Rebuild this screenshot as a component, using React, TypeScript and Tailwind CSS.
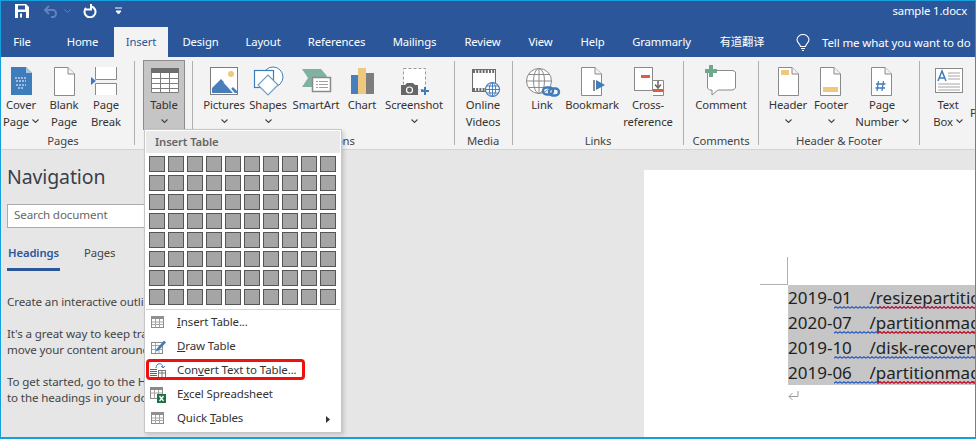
import type { ReactNode } from "react";

const Chevron = ({ className = "" }: { className?: string }) => (
  <svg width="7" height="5" viewBox="0 0 7 5" className={className}>
    <path d="M0.5 0.5 L3.5 3.5 L6.5 0.5" fill="none" stroke="#444" strokeWidth="1.1" />
  </svg>
);

const PagePath = ({ x = 10, w = 20 }: { x?: number; w?: number }) => (
  <>
    <path d={`M${x + 0.5} 5.5 H${x + w - 6} L${x + w + 0.5} 12 V33.5 H${x + 0.5} Z`} fill="#fff" stroke="#8a8a8a" />
    <path d={`M${x + w - 6} 5.5 V12 H${x + w + 0.5}`} fill="#f3f3f3" stroke="#8a8a8a" />
  </>
);

const Icon = ({ children }: { children: ReactNode }) => (
  <svg width="40" height="36" viewBox="0 0 40 36" className="shrink-0">
    {children}
  </svg>
);

const icons: Record<string, ReactNode> = {
  cover: (
    <Icon>
      <path d="M10 5 H25 L31 11 V33 H10 Z" fill="#3f7cbb" />
      <path d="M25 5 L31 11 H25 Z" fill="#a9c6e3" />
      <path d="M14 16 H26 M15 19 H25 M15 23 H25 M17 26 H23" stroke="#fff" strokeDasharray="2 1" fill="none" />
    </Icon>
  ),
  blank: (
    <Icon>
      <PagePath />
    </Icon>
  ),
  pageBreak: (
    <Icon>
      <rect x="10" y="5" width="20" height="12" fill="#fff" />
      <rect x="10" y="22" width="20" height="11" fill="#fff" />
      <path d="M9.5 5 V17.5 H30.5 V5" fill="none" stroke="#8a8a8a" />
      <path d="M9.5 33 V21.5 H30.5 V33" fill="none" stroke="#8a8a8a" />
      <path d="M5 15 L10 19 L5 23 Z" fill="#3f7cbb" />
    </Icon>
  ),
  table: (
    <Icon>
      <rect x="7" y="6" width="28" height="25" fill="#fff" />
      <rect x="7" y="6" width="28" height="5" fill="#6d6d6d" />
      <path d="M7.5 11 V30.5 H34.5 V11 M7 16.5 H35 M7 21.5 H35 M7 26.5 H35 M16.5 11 V31 M25.5 11 V31" fill="none" stroke="#7d7d7d" />
    </Icon>
  ),
  pictures: (
    <Icon>
      <rect x="6.5" y="5.5" width="27" height="27" fill="#fff" stroke="#7d7d7d" />
      <circle cx="27" cy="12" r="3" fill="#edc87e" />
      <path d="M8 31 V26 L17 17 L27 27 L29 25 L33 29 V31 Z" fill="#4a7ebb" />
      <path d="M20 20 L30 31" stroke="#fff" strokeWidth="1.5" />
    </Icon>
  ),
  shapes: (
    <Icon>
      <circle cx="25" cy="15" r="10" fill="#fff" stroke="#4a7ebb" />
      <rect x="6.5" y="8.5" width="19" height="17" fill="#fff" stroke="#3f7cbb" strokeWidth="1.2" />
      <path d="M20 13 L30 23 L20 33 L10 23 Z" fill="#fff" stroke="#6f9cc8" strokeWidth="1.2" />
    </Icon>
  ),
  smartArt: (
    <Icon>
      <path d="M6 7 H25 L31 14 L25 25 H6 L12 16 Z" fill="#7fb2a0" />
      <rect x="16.5" y="15.5" width="18" height="14" fill="#fff" stroke="#8a8a8a" strokeWidth="1.5" />
      <path d="M20 19.5 H22 M23 19.5 H32 M20 22.5 H22 M23 22.5 H32 M20 25.5 H22 M23 25.5 H32" stroke="#a0a0a0" />
    </Icon>
  ),
  chart: (
    <Icon>
      <rect x="9" y="13" width="7" height="19" fill="#4a7ebb" />
      <rect x="16" y="6" width="8" height="26" fill="#edc87e" />
      <rect x="24" y="11" width="8" height="21" fill="#7d7d7d" />
    </Icon>
  ),
  screenshot: (
    <Icon>
      <rect x="9.5" y="6.5" width="22" height="21" fill="#fff" stroke="#9a9a9a" strokeDasharray="3 2" />
      <path d="M7 23 H11 L13 21 H19 L21 23 H24 V33 H7 Z" fill="#666" />
      <circle cx="15.5" cy="28" r="3" fill="#666" stroke="#fff" strokeWidth="1.2" />
      <path d="M31 25 V33 M27 29 H35" stroke="#3f7cbb" strokeWidth="2" />
    </Icon>
  ),
  videos: (
    <Icon>
      <rect x="9.5" y="7.5" width="23" height="22" fill="#fff" stroke="#6d6d6d" />
      <path d="M10 9.5 H32 M10 27.5 H22" stroke="#6d6d6d" strokeWidth="3" strokeDasharray="2 1.2" />
      <circle cx="29.5" cy="27.5" r="7" fill="#fff" stroke="#4a7ebb" strokeWidth="1.2" />
      <path d="M22.5 27.5 H36.5 M23.5 24 H35.5 M23.5 31 H35.5 M29.5 20.5 V34.5" stroke="#4a7ebb" />
      <ellipse cx="29.5" cy="27.5" rx="3.2" ry="7" fill="none" stroke="#4a7ebb" />
    </Icon>
  ),
  link: (
    <Icon>
      <circle cx="17" cy="19" r="12.5" fill="#fff" stroke="#8a8a8a" />
      <ellipse cx="17" cy="19" rx="5.5" ry="12.5" fill="none" stroke="#8a8a8a" />
      <path d="M17 6.5 V31.5 M4.5 19 H29.5 M6.5 12.5 H27.5 M6.5 25.5 H27.5" stroke="#8a8a8a" />
      <rect x="21" y="25.5" width="10" height="7" rx="3.5" fill="none" stroke="#3f7cbb" strokeWidth="2.4" />
      <rect x="27" y="26.5" width="10" height="7" rx="3.5" fill="none" stroke="#3f7cbb" strokeWidth="2.4" />
    </Icon>
  ),
  bookmark: (
    <Icon>
      <PagePath x={9} w={20} />
      <rect x="21" y="18" width="2" height="11" fill="#8a8a8a" />
      <path d="M24 18 L33 23 L24 28 Z" fill="#3f7cbb" />
    </Icon>
  ),
  cross: (
    <Icon>
      <rect x="6.5" y="5.5" width="18" height="23" fill="#fff" stroke="#8a8a8a" />
      <rect x="13" y="13" width="9" height="3" fill="#d9603b" />
      <path d="M25 18.5 H35.5 V33.5 H25" fill="#fff" stroke="#8a8a8a" />
      <path d="M30 19 V25 M27 22.5 L30 26 L33 22.5" fill="none" stroke="#6d6d6d" strokeWidth="1.6" />
      <rect x="25" y="27" width="10" height="3" fill="#d9603b" />
    </Icon>
  ),
  comment: (
    <Icon>
      <path d="M8.5 8.5 H32 L34.5 10 V26 L32 28 H17 L11 33 V28 H8.5 L6.5 26 V10 Z" fill="#fff" stroke="#8a8a8a" />
      <path d="M8 3 H12 V7 H16 V11 H12 V15 H8 V11 H4 V7 H8 Z" fill="#6fa88f" />
    </Icon>
  ),
  header: (
    <Icon>
      <PagePath />
      <rect x="13" y="8" width="8" height="5" fill="#edc87e" />
    </Icon>
  ),
  footer: (
    <Icon>
      <PagePath x={9} w={20} />
      <rect x="12" y="25" width="15" height="5" fill="#edc87e" />
    </Icon>
  ),
  pageNumber: (
    <Icon>
      <PagePath x={9} w={20} />
      <path d="M16.5 19 L15 29 M21.5 19 L20 29 M14 22 H23.5 M13.5 26 H23" stroke="#3f7cbb" strokeWidth="1.3" />
    </Icon>
  ),
  textBox: (
    <Icon>
      <rect x="7.5" y="6.5" width="27" height="24" fill="#fff" stroke="#8a8a8a" />
      <path d="M10 19 L14 9 L18 19 M11.5 16 H16.5" fill="none" stroke="#3f7cbb" strokeWidth="1.5" />
      <path d="M20 11 H32 M20 14 H32 M20 17 H32 M10 22 H32 M10 25 H32 M10 28 H32" stroke="#a5a5a5" />
    </Icon>
  ),
};

type Btn = {
  icon: string;
  width: string;
  top: string;
  bottom?: string;
  chevron?: boolean;
  active?: boolean;
};

const RibbonButton = ({ icon, width, top, bottom, chevron, active }: Btn) => (
  <div
    className={`flex h-[70px] flex-col items-center pt-[2px] text-[11.3px] leading-[16.5px] text-[#333] ${width} ${
      active ? "border border-[#8c8c8c] bg-[#c5c5c5]" : ""
    }`}
  >
    <div className={`flex h-[35px] justify-center ${active ? "-mt-[1px]" : ""}`}>{icons[icon]}</div>
    <span className="whitespace-nowrap">{top}</span>
    <span className="flex h-[16.5px] items-center gap-[3px] whitespace-nowrap">
      {bottom}
      {chevron && <Chevron />}
    </span>
  </div>
);

type Group = {
  label: string;
  width: string;
  pad: string;
  buttons: Btn[];
};

const groups: Group[] = [
  {
    label: "Pages",
    width: "w-[126px]",
    pad: "mr-[8px]",
    buttons: [
      { icon: "cover", width: "w-[42px]", top: "Cover", bottom: "Page", chevron: true },
      { icon: "blank", width: "w-[44px]", top: "Blank", bottom: "Page" },
      { icon: "pageBreak", width: "w-[40px]", top: "Page", bottom: "Break" },
    ],
  },
  {
    label: "",
    width: "w-[42px]",
    pad: "ml-[8px] mr-[7px]",
    buttons: [{ icon: "table", width: "w-[42px]", top: "Table", chevron: true, active: true }],
  },
  {
    label: "Illustrations",
    width: "w-[242px]",
    pad: "ml-[10px] mr-[9px]",
    buttons: [
      { icon: "pictures", width: "w-[42px]", top: "Pictures", chevron: true },
      { icon: "shapes", width: "w-[46px]", top: "Shapes", chevron: true },
      { icon: "smartArt", width: "w-[50px]", top: "SmartArt" },
      { icon: "chart", width: "w-[42px]", top: "Chart" },
      { icon: "screenshot", width: "w-[62px]", top: "Screenshot", chevron: true },
    ],
  },
  {
    label: "Media",
    width: "w-[56px]",
    pad: "mr-[1px]",
    buttons: [{ icon: "videos", width: "w-[56px]", top: "Online", bottom: "Videos" }],
  },
  {
    label: "Links",
    width: "w-[152px]",
    pad: "ml-[9px] mr-[9px]",
    buttons: [
      { icon: "link", width: "w-[40px]", top: "Link" },
      { icon: "bookmark", width: "w-[60px]", top: "Bookmark" },
      { icon: "cross", width: "w-[52px]", top: "Cross-", bottom: "reference" },
    ],
  },
  {
    label: "Comments",
    width: "w-[74px]",
    pad: "",
    buttons: [{ icon: "comment", width: "w-[74px]", top: "Comment" }],
  },
  {
    label: "Header & Footer",
    width: "w-[142px]",
    pad: "ml-[9px] mr-[9px]",
    buttons: [
      { icon: "header", width: "w-[40px]", top: "Header", chevron: true },
      { icon: "footer", width: "w-[46px]", top: "Footer", chevron: true },
      { icon: "pageNumber", width: "w-[56px]", top: "Page", bottom: "Number", chevron: true },
    ],
  },
];

const tabs = [
  { name: "File", cls: "w-[44px]" },
  { name: "Home", cls: "ml-[7px] w-[63px]" },
  { name: "Insert", cls: "w-[54px] bg-[#f3f3f3] text-[#2b579a]" },
  { name: "Design", cls: "w-[65px]" },
  { name: "Layout", cls: "w-[60px]" },
  { name: "References", cls: "w-[87px]" },
  { name: "Mailings", cls: "w-[69px]" },
  { name: "Review", cls: "w-[67px]" },
  { name: "View", cls: "w-[49px]" },
  { name: "Help", cls: "w-[55px]" },
  { name: "Grammarly", cls: "w-[83px]" },
  { name: "有道翻译", cls: "w-[78px]" },
];

const TitleBar = () => (
  <div className="flex h-[27px] items-center justify-between bg-[#2b579a] pr-[9px] pb-[5px] pl-[15px]">
    <div className="flex items-center">
      <svg width="14" height="14" viewBox="0 0 14 14">
        <path d="M0 0 H11 L14 3 V14 H0 Z" fill="#fff" />
        <rect x="3" y="1.5" width="7" height="4" fill="#2b579a" />
        <rect x="3" y="8" width="8" height="6" fill="#2b579a" />
        <rect x="5" y="9.5" width="2" height="4" fill="#fff" />
      </svg>
      <svg width="16" height="13" viewBox="0 0 16 13" className="ml-[15px]">
        <path d="M1 5 H10 A4 4 0 0 1 10 12 H7 M5 1 L1 5 L5 9" fill="none" stroke="#5f83ba" strokeWidth="2" />
      </svg>
      <svg width="7" height="5" viewBox="0 0 7 5" className="ml-[4px]">
        <path d="M0.5 0.5 L3.5 3.5 L6.5 0.5" fill="none" stroke="#5f83ba" />
      </svg>
      <svg width="14" height="14" viewBox="0 0 14 14" className="ml-[12px]">
        <path d="M8.5 2.5 A5.5 5.5 0 1 1 3 4 M8 0 V5.5 H2.5" fill="none" stroke="#fff" strokeWidth="2" />
      </svg>
      <svg width="7" height="8" viewBox="0 0 7 8" className="ml-[18px]">
        <path d="M0 1 H7 M1 4 H6 L3.5 7 Z" fill="#fff" stroke="#fff" strokeWidth="1" />
      </svg>
    </div>
    <span className="text-[11.3px] text-white">sample 1.docx</span>
  </div>
);

const TabBar = () => (
  <div className="flex h-[30px] items-stretch bg-[#2b579a] text-[11.3px] text-white">
    {tabs.map((t) => (
      <div key={t.name} className={`flex items-center justify-center pt-[1px] ${t.cls}`}>
        {t.name}
      </div>
    ))}
    <div className="ml-[15px] flex items-center pt-[1px]">
      <svg width="14" height="18" viewBox="0 0 14 18">
        <path
          d="M4.5 12.5 C4.5 10 1 9 1 5.8 A6 5.3 0 0 1 13 5.8 C13 9 9.5 10 9.5 12.5 Z M5 14.5 H9 M6 16.5 H8"
          fill="none"
          stroke="#fff"
          strokeWidth="1.1"
        />
      </svg>
      <span className="ml-[12px] text-[11.5px] whitespace-nowrap">Tell me what you want to do</span>
    </div>
  </div>
);

const Ribbon = () => (
  <div className="flex h-[93px] overflow-hidden border-b border-[#d4d4d4] bg-[#f3f3f3]">
    {groups.map((g) => (
      <div key={g.label || "tables"} className="flex">
        <div className={`flex flex-col ${g.width} ${g.pad}`}>
          <div className="mt-[3px] flex h-[70px]">
            {g.buttons.map((b) => (
              <RibbonButton key={b.icon} {...b} />
            ))}
          </div>
          <div className="mt-[3px] text-center text-[11.3px] leading-[16px] whitespace-nowrap text-[#444]">{g.label}</div>
        </div>
        <div className="mt-[4px] h-[84px] w-px bg-[#b0b0b0]" />
      </div>
    ))}
    <div className="mt-[3px] ml-[8px] flex">
      <RibbonButton icon="textBox" width="w-[40px]" top="Text" bottom="Box" chevron />
      <span className="mt-[45px] ml-[2px] text-[11.3px] leading-[16.5px] text-[#333]">P</span>
    </div>
  </div>
);

const NavPane = () => (
  <div className="w-[300px] overflow-hidden pt-[13px] pl-[7px] whitespace-nowrap">
    <div className="text-[19.5px] leading-[27px] text-[#3a3f4a]">Navigation</div>
    <div className="mt-[14px] flex h-[24px] items-center border border-[#ababab] bg-white pb-[2px] pl-[6px] text-[11.6px] text-[#666]">
      Search document
    </div>
    <div className="mt-[16px] flex text-[11.3px] leading-[17px]">
      <div className="w-[53px] border-b-[3px] border-[#2b579a] pb-[7px] pl-[1px] font-semibold text-[#2b579a]">Headings</div>
      <div className="ml-[24px] text-[#444]">Pages</div>
    </div>
    <div className="mt-[23px] flex flex-col text-[11.6px] leading-[16px] text-[#444]">
      <p>Create an interactive outline of your document.</p>
      <p className="mt-[16px]">It&apos;s a great way to keep track of where you are or quickly</p>
      <p>move your content around by dragging headings.</p>
      <p className="mt-[16px]">To get started, go to the Home tab and apply Heading styles</p>
      <p>to the headings in your document.</p>
    </div>
  </div>
);

const docLines = [
  { date: "01", path: "resizepartition", bad: true },
  { date: "07", path: "partitionmagic", bad: true, year: "2020" },
  { date: "10", path: "disk-recovery", bad: false },
  { date: "06", path: "partitionmagic", bad: true },
];

// proofing squiggle under a doc line: blue first, red once the word is misspelt
const Squiggle = ({ bad }: { bad: boolean }) => (
  <svg width="144" height="3" className="absolute top-[21px] left-[46px]">
    <defs>
      <pattern id="wave-blue" width="4" height="3" patternUnits="userSpaceOnUse">
        <path d="M0 2.2 L2 0.7 L4 2.2" fill="none" stroke="#1f55c4" strokeWidth="1.1" />
      </pattern>
      <pattern id="wave-red" width="4" height="3" patternUnits="userSpaceOnUse">
        <path d="M0 2.2 L2 0.7 L4 2.2" fill="none" stroke="#e0101a" strokeWidth="1.1" />
      </pattern>
    </defs>
    <rect width="144" height="3" fill="url(#wave-blue)" />
    {bad && <rect x="43" width="101" height="3" fill="url(#wave-red)" />}
  </svg>
);

const DocPage = () => (
  <div className="mt-[20px] ml-[344px] h-[267px] flex-1 overflow-hidden bg-white">
    <div className="mt-[87px] ml-[116px] h-[28px] w-[28px] border-r border-b border-[#b0b0b0]" />
    <div className="ml-[144px] bg-[#c6c6c6] text-[17px] leading-[25px] tracking-normal whitespace-nowrap text-[#222]">
      {docLines.map((l) => (
        <div key={l.date} className="relative h-[25px]">
          {l.year ?? "2019"}-{l.date}
          {"\u00a0\u00a0\u00a0\u00a0"}/{l.path}
          <Squiggle bad={l.bad} />
        </div>
      ))}
    </div>
    <svg width="11" height="10" viewBox="0 0 11 10" className="mt-[6px] ml-[144px]">
      <path d="M10 0 V5.5 H1 M4.5 2 L1 5.5 L4.5 9" fill="none" stroke="#9a9a9a" />
    </svg>
  </div>
);

const SmallTable = () => (
  <svg width="16" height="16" viewBox="0 0 16 16">
    <rect x="1.5" y="2.5" width="12" height="11" fill="#fff" stroke="#8a8a8a" />
    <rect x="1" y="2" width="13" height="3" fill="#8f8f8f" />
    <path d="M1.5 8 H13.5 M1.5 10.5 H13.5 M5.5 5 V13.5 M9.5 5 V13.5" stroke="#a5a5a5" />
  </svg>
);

const menuItems: { key: string; icon: ReactNode; label: ReactNode; arrow?: boolean }[] = [
  {
    key: "insert",
    icon: <SmallTable />,
    label: (
      <>
        <u>I</u>nsert Table...
      </>
    ),
  },
  {
    key: "draw",
    icon: (
      <svg width="17" height="17" viewBox="0 0 17 17">
        <rect x="1.5" y="4.5" width="11" height="11" fill="#fff" stroke="#8a8a8a" />
        <path d="M1.5 7.5 H12.5 M1.5 11.5 H12.5 M5.5 4.5 V15.5 M9 7.5 V15.5" stroke="#a5a5a5" />
        <path d="M6.5 11 L14 2.5 L16 4.5 L8.5 12.5 L6 13.5 Z" fill="#3f7cbb" />
      </svg>
    ),
    label: (
      <>
        <u>D</u>raw Table
      </>
    ),
  },
  {
    key: "convert",
    icon: (
      <svg width="17" height="17" viewBox="0 0 17 17">
        <path d="M6 6 C6 1 12 0 13 5 M11 4 L13 6 L15 4" fill="none" stroke="#3f7cbb" />
        <path d="M0 7.5 H7 M0 9.5 H7 M0 11.5 H7 M0 13.5 H7 M0 15.5 H7" stroke="#2b6cb5" />
        <rect x="8.5" y="8.5" width="7" height="7.5" fill="#fff" stroke="#777" />
        <path d="M8.5 11 H15.5 M12 8.5 V16" stroke="#777" />
      </svg>
    ),
    label: (
      <>
        Con<u>v</u>ert Text to Table...
      </>
    ),
  },
  {
    key: "excel",
    icon: (
      <svg width="17" height="17" viewBox="0 0 17 17">
        <rect x="0.5" y="1.5" width="12" height="11" fill="#fff" stroke="#8a8a8a" />
        <rect x="0" y="1" width="13" height="3" fill="#8a8a8a" />
        <path d="M0.5 7 H12.5 M4.5 4 V12.5 M8.5 4 V12.5" stroke="#a5a5a5" />
        <rect x="7" y="8" width="9" height="9" fill="#1e7145" />
        <path d="M9.5 10 L13.5 15 M13.5 10 L9.5 15" stroke="#fff" strokeWidth="1.3" />
      </svg>
    ),
    label: (
      <>
        E<u>x</u>cel Spreadsheet
      </>
    ),
  },
  {
    key: "quick",
    icon: <SmallTable />,
    label: (
      <>
        Quick <u>T</u>ables
      </>
    ),
    arrow: true,
  },
];

const InsertTableMenu = () => (
  <div className="absolute top-[129px] left-[144px] h-[304px] w-[198px] border border-[#c6c6c6] bg-white p-px shadow-[2px_2px_4px_rgba(0,0,0,0.15)]">
    <div className="flex h-[22px] items-center bg-[#e9e9e9] pl-[9px] text-[11.3px] font-semibold text-[#666]">Insert Table</div>
    <div className="mt-[3px] ml-[3px] grid w-[187px] grid-cols-10 gap-[3px]">
      {Array.from({ length: 80 }, (_, i) => (
        <div key={i} className="h-[16px] w-[16px] border border-[#555] bg-[#a5a5a5]" />
      ))}
    </div>
    <div className="mt-[4px] h-px bg-[#d4d4d4]" />
    <div className="flex flex-col pt-[1px]">
      {menuItems.map((m) => (
        <div key={m.key} className="relative flex h-[24px] items-center pb-[2px] text-[11.5px] text-[#333]">
          <div className="ml-[4px] flex w-[27px] items-center">{m.icon}</div>
          <span className="whitespace-nowrap">{m.label}</span>
          {m.arrow && (
            <svg width="4" height="7" viewBox="0 0 4 7" className="absolute top-[9px] right-[10px]">
              <path d="M0 0 L4 3.5 L0 7 Z" fill="#333" />
            </svg>
          )}
          {m.key === "convert" && (
            <div className="absolute top-0 left-0 h-[21px] w-[159px] rounded-[4px] border-[3px] border-[#f01010]" />
          )}
        </div>
      ))}
    </div>
  </div>
);

export default function App() {
  return (
    <div className="relative h-[439px] w-[976px] overflow-hidden bg-[#e6e6e6] font-['Noto_Sans','Noto_Sans_CJK_SC',sans-serif] tracking-[-0.12px]">
      <TitleBar />
      <TabBar />
      <Ribbon />
      <div className="flex h-[289px]">
        <NavPane />
        <DocPage />
      </div>
      <InsertTableMenu />
      {/* window frame */}
      <div className="pointer-events-none absolute inset-0 border border-b-2 border-[#14a0dc]" />
    </div>
  );
}
